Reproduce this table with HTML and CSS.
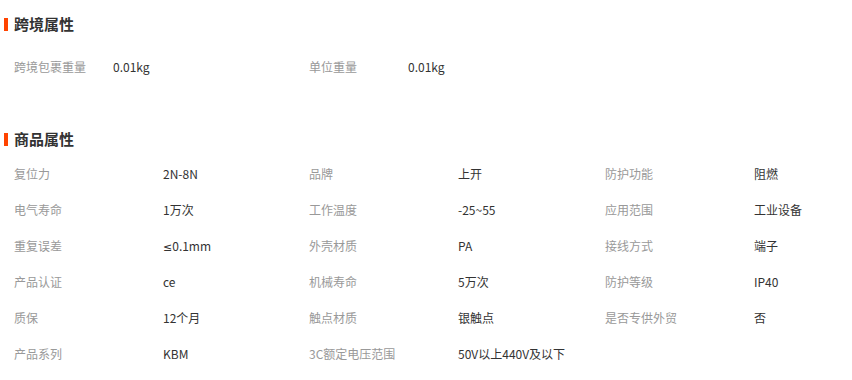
FILE: index.html
```html
<!DOCTYPE html>
<html lang="zh">
<head>
<meta charset="utf-8">
<link rel="stylesheet" href="styles.css">
</head>
<body>
<div class="page">
  <section class="block block-cross">
    <h2 class="title"><span class="bar"></span>跨境属性</h2>
    <div class="grid grid-cross">
      <div class="item"><span class="label">跨境包裹重量</span><span class="value">0.01kg</span></div>
      <div class="item"><span class="label">单位重量</span><span class="value">0.01kg</span></div>
    </div>
  </section>
  <section class="block block-goods">
    <h2 class="title"><span class="bar"></span>商品属性</h2>
    <div class="grid grid-goods">
      <div class="item"><span class="label">复位力</span><span class="value">2N-8N</span></div>
      <div class="item"><span class="label">品牌</span><span class="value">上开</span></div>
      <div class="item"><span class="label">防护功能</span><span class="value">阻燃</span></div>
      <div class="item"><span class="label">电气寿命</span><span class="value">1万次</span></div>
      <div class="item"><span class="label">工作温度</span><span class="value">-25~55</span></div>
      <div class="item"><span class="label">应用范围</span><span class="value">工业设备</span></div>
      <div class="item"><span class="label">重复误差</span><span class="value"><span class="sym">≤</span>0.1mm</span></div>
      <div class="item"><span class="label">外壳材质</span><span class="value">PA</span></div>
      <div class="item"><span class="label">接线方式</span><span class="value">端子</span></div>
      <div class="item"><span class="label">产品认证</span><span class="value">ce</span></div>
      <div class="item"><span class="label">机械寿命</span><span class="value">5万次</span></div>
      <div class="item"><span class="label">防护等级</span><span class="value">IP40</span></div>
      <div class="item"><span class="label">质保</span><span class="value">12个月</span></div>
      <div class="item"><span class="label">触点材质</span><span class="value">银触点</span></div>
      <div class="item"><span class="label">是否专供外贸</span><span class="value">否</span></div>
      <div class="item"><span class="label">产品系列</span><span class="value">KBM</span></div>
      <div class="item"><span class="label">3C额定电压范围</span><span class="value">50V以上440V及以下</span></div>
    </div>
  </section>
</div>
</body>
</html>
```
FILE: styles.css
```css
html, body {
  margin: 0;
  padding: 0;
  background: #fff;
  overflow: hidden;
}
.page {
  width: 848px;
  padding: 14px 0 0 4px;
  font-family: "Noto Sans CJK SC", "Microsoft YaHei", sans-serif;
  font-size: 12px;
  color: #333;
}
.title {
  display: flex;
  align-items: center;
  gap: 6px;
  margin: 0;
  height: 20px;
  line-height: 20px;
  font-size: 15px;
  font-weight: bold;
  color: #333;
}
.bar {
  width: 4px;
  height: 13px;
  background: #ff4400;
}
.grid {
  display: grid;
  padding-left: 10px;
}
.grid-cross {
  grid-template-columns: 295px 295px;
  margin-top: 15px;
}
.grid-cross .label {
  width: 99px;
}
.block-goods {
  margin-top: 44px;
}
.grid-goods {
  grid-template-columns: 295px 296px 1fr;
  margin-top: 7px;
}
.grid-goods .label {
  width: 149px;
}
.item {
  display: flex;
  height: 36px;
  line-height: 36px;
  white-space: nowrap;
}
.label {
  flex: none;
  color: #999;
}
.value {
  color: #333;
}
.sym {
  font-family: "DejaVu Sans", sans-serif;
  font-size: 11px;
}
```
